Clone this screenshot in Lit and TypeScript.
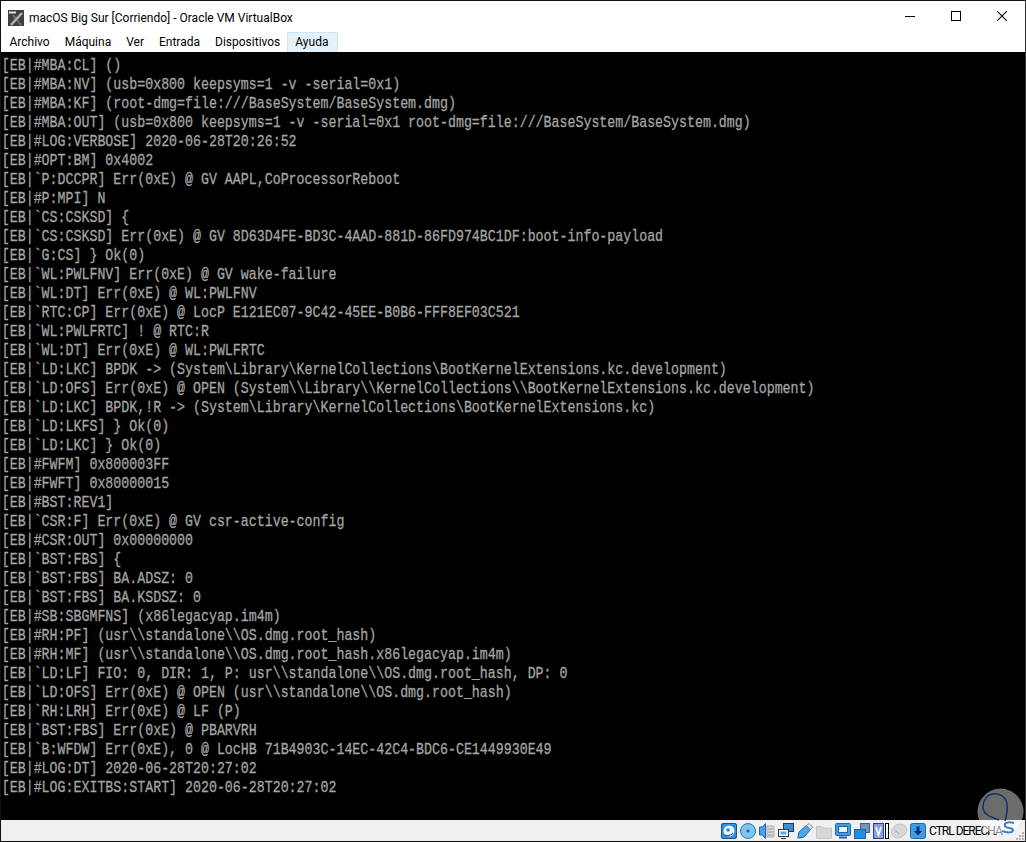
import { LitElement, html, css, svg } from "lit";
import { customElement } from "lit/decorators.js";

const LINES = [
  "[EB|#MBA:CL] ()",
  "[EB|#MBA:NV] (usb=0x800 keepsyms=1 -v -serial=0x1)",
  "[EB|#MBA:KF] (root-dmg=file:///BaseSystem/BaseSystem.dmg)",
  "[EB|#MBA:OUT] (usb=0x800 keepsyms=1 -v -serial=0x1 root-dmg=file:///BaseSystem/BaseSystem.dmg)",
  "[EB|#LOG:VERBOSE] 2020-06-28T20:26:52",
  "[EB|#OPT:BM] 0x4002",
  "[EB|`P:DCCPR] Err(0xE) @ GV AAPL,CoProcessorReboot",
  "[EB|#P:MPI] N",
  "[EB|`CS:CSKSD] {",
  "[EB|`CS:CSKSD] Err(0xE) @ GV 8D63D4FE-BD3C-4AAD-881D-86FD974BC1DF:boot-info-payload",
  "[EB|`G:CS] } Ok(0)",
  "[EB|`WL:PWLFNV] Err(0xE) @ GV wake-failure",
  "[EB|`WL:DT] Err(0xE) @ WL:PWLFNV",
  "[EB|`RTC:CP] Err(0xE) @ LocP E121EC07-9C42-45EE-B0B6-FFF8EF03C521",
  "[EB|`WL:PWLFRTC] ! @ RTC:R",
  "[EB|`WL:DT] Err(0xE) @ WL:PWLFRTC",
  "[EB|`LD:LKC] BPDK -> (System\\Library\\KernelCollections\\BootKernelExtensions.kc.development)",
  "[EB|`LD:OFS] Err(0xE) @ OPEN (System\\\\Library\\\\KernelCollections\\\\BootKernelExtensions.kc.development)",
  "[EB|`LD:LKC] BPDK,!R -> (System\\Library\\KernelCollections\\BootKernelExtensions.kc)",
  "[EB|`LD:LKFS] } Ok(0)",
  "[EB|`LD:LKC] } Ok(0)",
  "[EB|#FWFM] 0x800003FF",
  "[EB|#FWFT] 0x80000015",
  "[EB|#BST:REV1]",
  "[EB|`CSR:F] Err(0xE) @ GV csr-active-config",
  "[EB|#CSR:OUT] 0x00000000",
  "[EB|`BST:FBS] {",
  "[EB|`BST:FBS] BA.ADSZ: 0",
  "[EB|`BST:FBS] BA.KSDSZ: 0",
  "[EB|#SB:SBGMFNS] (x86legacyap.im4m)",
  "[EB|#RH:PF] (usr\\\\standalone\\\\OS.dmg.root_hash)",
  "[EB|#RH:MF] (usr\\\\standalone\\\\OS.dmg.root_hash.x86legacyap.im4m)",
  "[EB|`LD:LF] FIO: 0, DIR: 1, P: usr\\\\standalone\\\\OS.dmg.root_hash, DP: 0",
  "[EB|`LD:OFS] Err(0xE) @ OPEN (usr\\\\standalone\\\\OS.dmg.root_hash)",
  "[EB|`RH:LRH] Err(0xE) @ LF (P)",
  "[EB|`BST:FBS] Err(0xE) @ PBARVRH",
  "[EB|`B:WFDW] Err(0xE), 0 @ LocHB 71B4903C-14EC-42C4-BDC6-CE1449930E49",
  "[EB|#LOG:DT] 2020-06-28T20:27:02",
  "[EB|#LOG:EXITBS:START] 2020-06-28T20:27:02",
];
const MENU = ["Archivo", "Máquina", "Ver", "Entrada", "Dispositivos", "Ayuda"];

const ic = (w: number, body: unknown) => html`<svg class="ic" width=${w} height="16" viewBox="0 0 ${w} 16">${body}</svg>`;

@customElement("app-root")
export class AppRoot extends LitElement {
  static styles = css`
    :host { display: block; width: 1026px; height: 842px; overflow: hidden; background: #fff; position: relative;
      font-family: Roboto, "Noto Sans", sans-serif; }
    .win { height: 842px; box-sizing: border-box; border: 1px solid #111; border-right-color: #333; display: flex; flex-direction: column; }
    .title { height: 29px; flex: none; display: flex; align-items: center; color: #000; font-size: 12px; padding-left: 7px; gap: 5px; }
    .title span { flex: 1; position: relative; top: 2px; }
    .logo { position: relative; top: 2px; }
    .ctl { width: 46px; height: 29px; display: flex; align-items: center; justify-content: center; }
    .ctls { display: flex; }
    .menu { height: 22px; flex: none; display: flex; font-size: 12px; color: #000; align-items: stretch; }
    .menu div { padding: 0 7.500px 2px 7.500px; display: flex; align-items: center; border: 1px solid transparent; border-bottom: none; margin: 2px -2px 0 0; }
    .menu .on { background: #e5f1fb; border-color: #cce4f7; padding: 0 8.500px 2px 7.500px; }
    .screen { flex: 1; background: #000; color: #a4a4a4; overflow: hidden; padding-top: 4px; min-height: 0; }
    .line { height: 19px; line-height: 19px; white-space: pre; font-family: "Liberation Mono", monospace; font-size: 17px; padding-left: 1px;
      -webkit-text-stroke: 0.3px #a4a4a4; transform: scaleX(0.781); transform-origin: 0 0; }
    .status { height: 21px; flex: none; background: #f0f0f0; display: flex; align-items: center; padding-left: 720px; gap: 3px; position: relative; }
    .ic { flex: none; display: block; }
    .bracket { margin-left: -2px; margin-right: -1px; }
    .hk { font-size: 12px; letter-spacing: -1px; color: #000; white-space: nowrap; }
    .grip { position: absolute; left: 1015px; top: 12px; }
    .wm { position: absolute; left: 976px; top: 786px; }
  `;

  render() {
    return html`<div class="win">
      <div class="title">
        <svg class="logo" width="16" height="16" viewBox="0 0 16 16">
          <rect width="16" height="16" fill="#404040"/>
          <path d="M1 2.500h7" stroke="#e0e0e0" stroke-width="2"/>
          <path d="M5 5L13 15" stroke="#707070" stroke-width="2" fill="none"/>
          <path d="M3 15L14 3" stroke="#b0b0b0" stroke-width="2.500" fill="none"/>
        </svg>
        <span>macOS Big Sur [Corriendo] - Oracle VM VirtualBox</span>
        <div class="ctls">
          <div class="ctl"><svg width="10" height="10"><path d="M0 5.500h10" stroke="#000"/></svg></div>
          <div class="ctl"><svg width="10" height="10"><rect x=".5" y=".5" width="9" height="9" fill="none" stroke="#000"/></svg></div>
          <div class="ctl"><svg width="10" height="10"><path d="M0 0L10 10M10 0L0 10" stroke="#000" stroke-width="1.050"/></svg></div>
        </div>
      </div>
      <div class="menu">${MENU.map((m) => html`<div class=${m === "Ayuda" ? "on" : ""}>${m}</div>`)}</div>
      <div class="screen">${LINES.map((l) => html`<div class="line">${l}</div>`)}</div>
      <div class="status">
        ${ic(16, svg`<rect x=".5" y=".5" width="15" height="15" rx="1.500" fill="#2f8fe0" stroke="#14538f"/><circle cx="8" cy="8" r="5.500" fill="#eef6fc"/><circle cx="7" cy="7" r="1.800" fill="#2f7fc8"/><path d="M4 12q5 2 8-2" stroke="#14538f" stroke-width="1.200" fill="none"/>`)}
        ${ic(16, svg`<circle cx="8" cy="8" r="7.500" fill="#7cc4f2" stroke="#2a78b8"/><circle cx="8" cy="8" r="1.500" fill="#1c5f9c"/>`)}
        ${ic(16, svg`<path d="M.5 4h3l3-3.500v15l-3-3.500h-3z" fill="#4aa3e6" stroke="#1e66a8"/><path d="M8 3h7v11H8z" fill="#ddd" stroke="#aaa"/><path d="M9 6h5M9 9h5M9 12h5" stroke="#999"/>`)}
        ${ic(16, svg`<rect x="5.500" y=".5" width="10" height="8" fill="#3a8fdc" stroke="#333"/><rect x=".5" y="6.500" width="10" height="7" fill="#fff" stroke="#333"/><rect x="2.500" y="8.500" width="6" height="3" fill="#5aa8e8"/><path d="M3 15.500h5" stroke="#333"/>`)}
        ${ic(16, svg`<path d="M.8 15.200 L2 9 L9.500 2.500 L13.500 6.500 L7 14 Z" fill="#4ea6ea" stroke="#1e66a8"/><path d="M9.500 2.500 L12 .5 L15.500 4 L13.500 6.500 Z" fill="#e4e4e4" stroke="#888"/>`)}
        ${ic(16, svg`<path d="M.5 3.500h5l1.500 1.500h8.500v10.500h-15z" fill="#d6d6d6" stroke="#c6c6c6"/>`)}
        ${ic(16, svg`<rect x=".5" y=".5" width="15" height="12" rx="1" fill="#3f9de6" stroke="#1e66a8"/><rect x="3.500" y="3.500" width="9" height="6" fill="#eaf4fc" stroke="#1e66a8"/><path d="M4 14.500h8" stroke="#1e66a8" stroke-width="2"/>`)}
        ${ic(16, svg`<rect x="6.500" y=".5" width="9" height="9" fill="#7a94b8" stroke="#40608c"/><rect x=".5" y="6.500" width="11" height="9" fill="#1f8fe8" stroke="#1e66a8"/>`)}
        ${ic(11, svg`<rect x=".5" y=".5" width="10" height="15" fill="#8aa0e0" stroke="#2c3f90"/><path d="M3 4l2.500 8L8 4" fill="none" stroke="#fff" stroke-width="1.600"/>`)}
        <svg class="ic bracket" width="4" height="16" viewBox="0 0 4 16"><rect x=".5" y=".5" width="3" height="15" fill="#fff" stroke="#000"/></svg>
        ${ic(16, svg`<ellipse cx="8" cy="8" rx="8" ry="6.500" fill="#d8d8d8" stroke="#c4c4c4" transform="rotate(-30 8 8)"/><path d="M3.500 7l5 4" stroke="#aaa"/>`)}
        ${ic(16, svg`<rect x=".5" y=".5" width="15" height="15" rx="2" fill="#3f9de6" stroke="#1e66a8"/><path d="M6.500 3.500h3v4.500h2.500l-4 4.500-4-4.500h2.500z" fill="#0c2f66"/>`)}
        <span class="hk">CTRL DERECHA</span>
        <svg class="grip" width="8" height="8" viewBox="0 0 8 8" fill="#b4b4b4">
          <rect x="6" y="0" width="2" height="2"/><rect x="3" y="3" width="2" height="2"/><rect x="6" y="3" width="2" height="2"/>
          <rect x="0" y="6" width="2" height="2"/><rect x="3" y="6" width="2" height="2"/><rect x="6" y="6" width="2" height="2"/>
        </svg>
      </div>
      <svg class="wm" width="50" height="56" viewBox="0 0 50 56">
        <path d="M3.100 34A23 23 0 1 1 45.900 34Z" fill="#6c6c6c"/>
        <path d="M3.100 34A23 23 0 0 0 45.900 34Z" fill="#fff" fill-opacity=".55"/>
        <path d="M29 35C31 28 32 24 31 18C30 11 24 7 17 8C10 9 7 15 7 21C7 28 14 31 23 34" fill="none" stroke="#10306e" stroke-width="1.500"/>
        <path d="M38 37C32 35 28 37 29 40C30 43 37 41 37 44C37 47 31 47 26 45" fill="none" stroke="#3a7fc4" stroke-width="2"/>
      </svg>
    </div>`;
  }
}
